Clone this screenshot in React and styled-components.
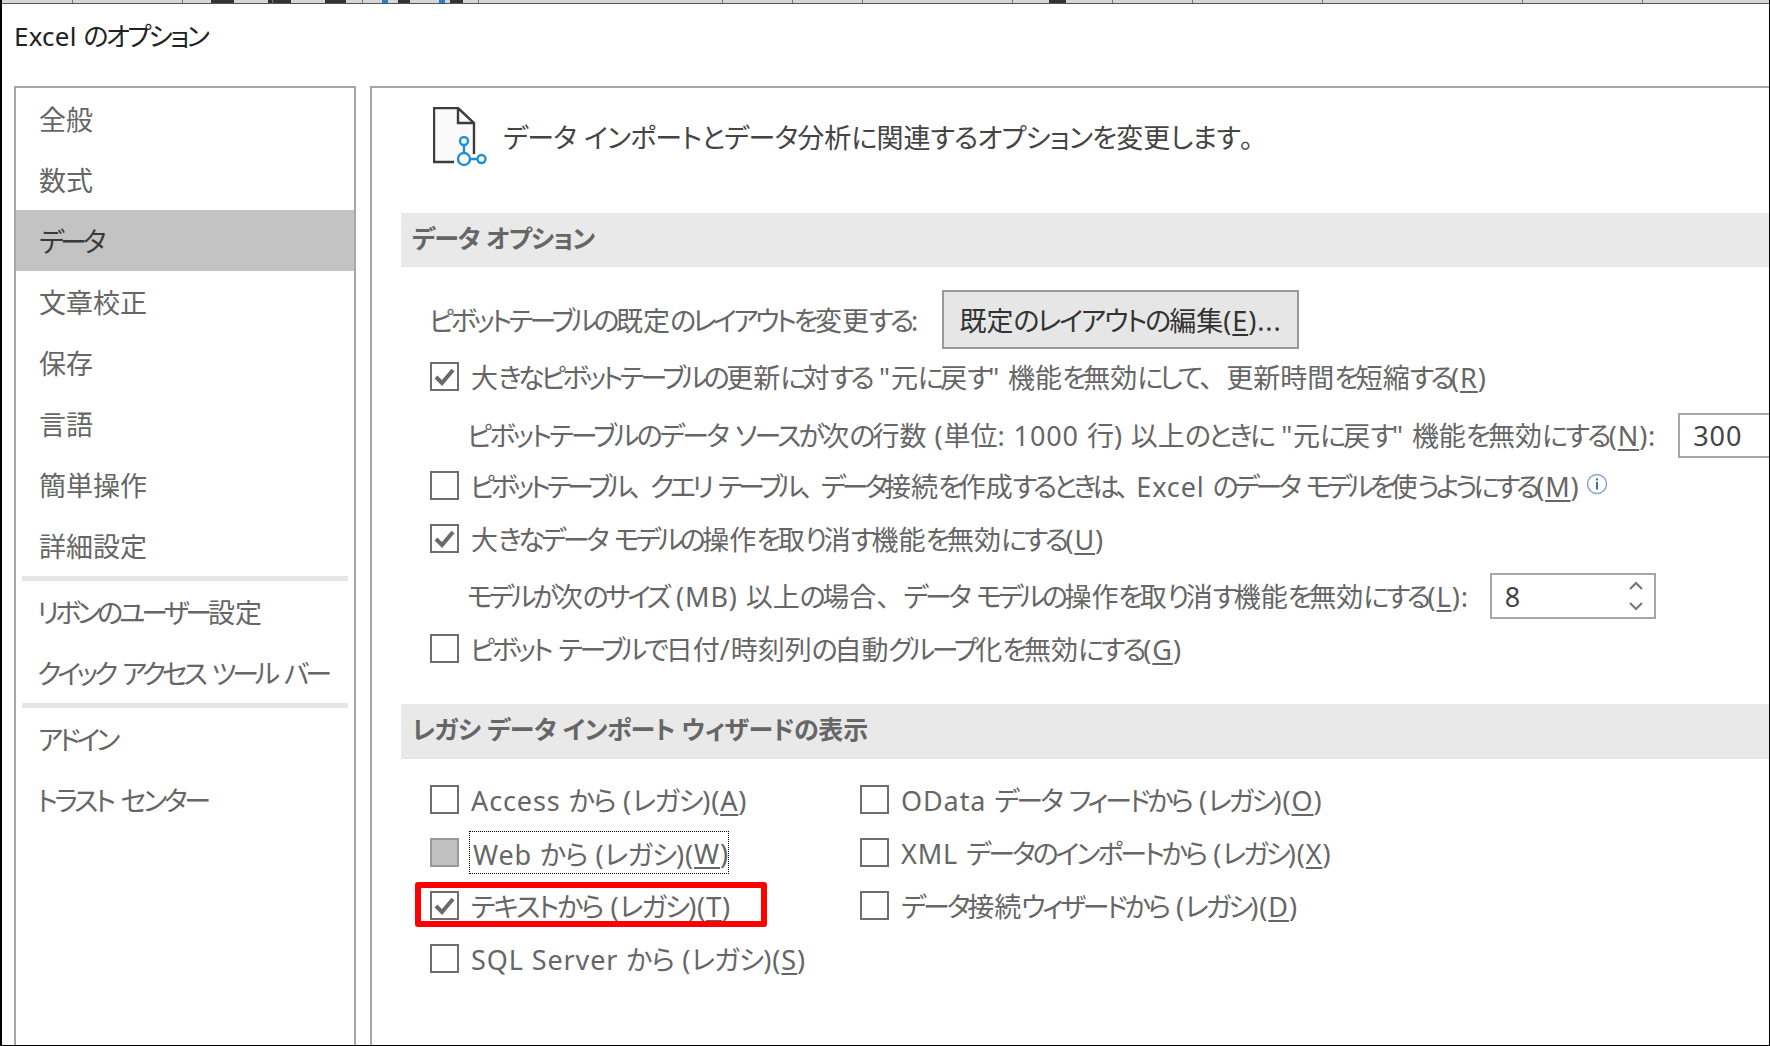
import React from 'react';
import styled, { createGlobalStyle } from 'styled-components';

const Global = createGlobalStyle`
  html, body { margin: 0; padding: 0; background: #fff; }
  * { box-sizing: border-box; }
`;

const tracking = p => `
  ${p.$k != null ? `--k: ${p.$k}px;` : ''}
  ${p.$l != null ? `--l: ${p.$l}px;` : ''}
  ${p.$p != null ? `--p: ${p.$p}px;` : ''}
`;

const Window = styled.div`
  --k: -3px;
  --l: 0.9px;
  --p: 0px;
  width: 1770px;
  height: 1046px;
  overflow: hidden;
  display: flex;
  flex-direction: column;
  background: #fff;
  border-left: 2px solid #000;
  border-right: 1px solid #000;
  border-bottom: 1px solid #000;
  font-family: "Noto Sans", "Noto Sans CJK JP", sans-serif;
  font-feature-settings: "palt";
  font-size: 27px;
  color: #666;
`;

const Kana = styled.span`
  letter-spacing: var(--k);
`;

const Latin = styled.span`
  letter-spacing: var(--l);
`;

const Punct = styled.span`
  font-feature-settings: normal;
  letter-spacing: var(--p);
`;

const Key = styled.span`
  letter-spacing: var(--l);
  text-decoration: underline;
  text-underline-offset: 3px;
  text-decoration-thickness: 1.5px;
`;

const RUNS = /[\u3040-\u30ff]+|[、。]|[\x00-\x7f]+|[^\x00-\x7f\u3040-\u30ff、。]+/g;

const splitRuns = text =>
  text.match(RUNS).map((run, i) => {
    if (/^[\u3040-\u30ff]/.test(run)) return <Kana key={i}>{run}</Kana>;
    if (/^[、。]/.test(run)) return <Punct key={i}>{run}</Punct>;
    if (/^[\x00-\x7f]/.test(run)) return <Latin key={i}>{run}</Latin>;
    return <span key={i}>{run}</span>;
  });

const T = ({ children }) => (
  <span>
    {React.Children.map(children, c => (typeof c === 'string' ? splitRuns(c) : c))}
  </span>
);

const TopSliver = styled.svg`
  display: block;
  flex: none;
`;

const Title = styled.div`
  ${tracking}
  flex: none;
  height: 82px;
  padding: 12px 0 0 12px;
  font-size: 26px;
  line-height: 40px;
  color: #222;
`;

const Body = styled.div`
  flex: 1;
  min-height: 0;
  display: flex;
  gap: 14px;
  padding-left: 12px;
`;

const Sidebar = styled.nav`
  flex: none;
  width: 342px;
  border: 2px solid #a6a6a6;
  border-bottom: none;
`;

const NavItem = styled.div`
  ${tracking}
  height: 61px;
  display: flex;
  align-items: center;
  white-space: nowrap;
  padding-left: ${p => p.$pad ?? 23}px;
  background: ${p => (p.$active ? '#c3c3c3' : 'transparent')};
  color: ${p => (p.$active ? '#3a3a3a' : '#666')};
`;

const NavRule = styled.div`
  height: 5px;
  margin: 0 6px;
  background: #e6e6e6;
`;

const Panel = styled.main`
  flex: 1;
  min-width: 0;
  overflow: hidden;
  border: 2px solid #a6a6a6;
  border-width: 2px 0 0 2px;
  padding-left: 29px;
`;

const Header = styled.header`
  height: 125px;
  display: flex;
  align-items: flex-start;
  gap: 14px;
  padding: 19px 0 0 32px;
  color: #444;
`;

const HeaderText = styled.h1`
  ${tracking}
  margin: 11px 0 0;
  font-size: 27px;
  font-weight: 400;
  line-height: 40px;
  white-space: nowrap;
`;

const Band = styled.h2`
  ${tracking}
  margin: 0;
  height: ${p => p.$h}px;
  display: flex;
  align-items: center;
  padding: 0 0 6px 11px;
  background: #e9e9e9;
  border-bottom: 1px solid #e2e2e2;
  font-size: 25px;
  font-weight: 700;
  color: #666;
  white-space: nowrap;
`;

const Options = styled.div`
  padding: 23px 0 27px 28px;
  display: flex;
  flex-direction: column;
`;

const Row = styled.div`
  height: ${p => p.$h}px;
  display: flex;
  align-items: center;
  white-space: nowrap;
  padding-left: ${p => p.$indent ?? 1}px;
`;

const Label = styled.span`
  ${tracking}
  margin-left: ${p => p.$ml ?? 0}px;
  padding-top: 2px;
  line-height: 38px;
`;

const Button = styled.button`
  ${tracking}
  flex: none;
  height: 59px;
  width: 357px;
  margin-left: ${p => p.$ml}px;
  background: #e6e6e6;
  border: 2px solid #999;
  font: inherit;
  font-feature-settings: inherit;
  color: #333;
  padding: 0;
  white-space: nowrap;
`;

const Box = styled.span`
  flex: none;
  width: 29px;
  height: 29px;
  display: inline-flex;
  align-items: center;
  justify-content: center;
  border: 2px solid ${p => (p.$muted ? '#999' : '#6e6e6e')};
  background: ${p => (p.$muted ? '#c1c1c1' : '#fff')};
`;

const Field = styled.div`
  flex: none;
  height: ${p => p.$h}px;
  width: ${p => p.$w}px;
  margin-left: ${p => p.$ml}px;
  display: flex;
  align-items: center;
  justify-content: space-between;
  padding: 0 10px 0 13px;
  border: 2px solid #a6a6a6;
  border-right-width: ${p => (p.$open ? 0 : 2)}px;
  color: #444;
  letter-spacing: var(--l);
`;

const Spin = styled.svg`
  display: block;
`;

const Info = styled.svg`
  flex: none;
  margin: -3px 0 0 6px;
`;

const Legacy = styled.div`
  padding: 14px 0 0 29px;
  display: grid;
  grid-template-columns: 430px 1fr;
  grid-auto-rows: 53px;
`;

const Cell = styled.div`
  position: relative;
  display: flex;
  align-items: center;
  white-space: nowrap;
`;

const Focus = styled.span`
  ${tracking}
  display: flex;
  align-items: center;
  height: 43px;
  width: 260px;
  margin-left: 10px;
  padding: 2px 0 0 3px;
  border: 1px dotted #000;
`;

const Callout = styled.div`
  position: absolute;
  left: -15px;
  top: 3px;
  width: 352px;
  height: 45px;
  border: 6px solid #ff0000;
  border-radius: 3px;
  pointer-events: none;
`;

const Check = () => (
  <svg width="21" height="19" viewBox="0 0 21 19" aria-hidden="true">
    <path d="M2 10 L8 16 L19 3" fill="none" stroke="#6a6a6a" strokeWidth="4" />
  </svg>
);

const CheckBox = ({ on, muted }) => <Box $muted={muted}>{on && <Check />}</Box>;

const DocIcon = () => (
  <svg width="56" height="62" viewBox="0 0 56 62" aria-hidden="true">
    <path d="M21 55 H1 V1 H25 L41 16 V47" fill="#fafafa" stroke="#3c3c3c" strokeWidth="2.4" />
    <path d="M25 1 V16 H41" fill="none" stroke="#3c3c3c" strokeWidth="2.4" />
    <g fill="#fff" stroke="#1e8fd5" strokeWidth="2.4">
      <path d="M31 38 V46 M37 52 H44" fill="none" />
      <circle cx="31" cy="34" r="4" />
      <circle cx="31" cy="52" r="6" />
      <circle cx="48.5" cy="52" r="4" />
    </g>
  </svg>
);

const navTop = ['全般', '数式', 'データ', '文章校正', '保存', '言語', '簡単操作', '詳細設定'];

const sliverDark = [[209, 23], [266, 23], [323, 21], [396, 12], [448, 13], [1047, 17]];
const sliverTicks = [70, 180, 270, 360, 476, 720, 790, 860, 1010, 1110, 1190, 1320, 1520, 1640];

export default function App() {
  return (
    <>
      <Global />
      <Window>
        <TopSliver width="1767" height="4" viewBox="0 0 1767 4" aria-hidden="true">
          <rect width="1767" height="3" fill="#d6d6d6" />
          <rect y="3" width="1767" height="1" fill="#555" />
          {sliverDark.map(([x, w]) => <rect key={x} x={x} width={w} height="3" fill="#333" />)}
          {sliverTicks.map(x => <rect key={x} x={x} width="1" height="3" fill="#777" />)}
          <rect x="380" width="6" height="3" fill="#2a7fbf" />
          <rect x="437" width="6" height="3" fill="#2a7fbf" />
        </TopSliver>
        <Title $k={-2.6} $l={0.2}><T>Excel のオプション</T></Title>
        <Body>
          <Sidebar>
            {navTop.map(t => (
              <NavItem key={t} $active={t === 'データ'} $k={-4}><T>{t}</T></NavItem>
            ))}
            <NavRule />
            <NavItem $pad={21} $k={-4}><T>リボンのユーザー設定</T></NavItem>
            <NavItem $pad={21} $k={-4.1}><T>クイック アクセス ツール バー</T></NavItem>
            <NavRule />
            <NavItem $pad={22} $k={-4}><T>アドイン</T></NavItem>
            <NavItem $pad={21} $k={-3.2}><T>トラスト センター</T></NavItem>
          </Sidebar>
          <Panel>
            <Header>
              <DocIcon />
              <HeaderText $k={-0.8}><T>データ インポートとデータ分析に関連するオプションを変更します。</T></HeaderText>
            </Header>
            <Band $h={54} $k={-1} $l={0}><T>データ オプション</T></Band>
            <Options>
              <Row $h={59} $indent={0}>
                <Label $k={-3.4}><T>ピボットテーブルの既定のレイアウトを変更する:</T></Label>
                <Button $ml={23} $k={-2}><T>既定のレイアウトの編集(</T><Key>E</Key><T>)...</T></Button>
              </Row>
              <Row $h={55}>
                <CheckBox on />
                <Label $ml={12} $k={-3.6}><T>大きなピボットテーブルの更新に対する "元に戻す" 機能を無効にして、更新時間を短縮する(</T><Key>R</Key><T>)</T></Label>
              </Row>
              <Row $h={62} $indent={38}>
                <Label $k={-2.75}><T>ピボットテーブルのデータ ソースが次の行数 (単位: 1000 行) 以上のときに "元に戻す" 機能を無効にする(</T><Key>N</Key><T>):</T></Label>
                <Field $h={45} $w={110} $ml={22} $open>300</Field>
              </Row>
              <Row $h={39}>
                <CheckBox />
                <Label $ml={11} $k={-4.1} $p={-6}><T>ピボットテーブル、クエリ テーブル、データ接続を作成するときは、Excel のデータ モデルを使うようにする(</T><Key>M</Key><T>)</T></Label>
                <Info width="22" height="22" viewBox="0 0 22 22" aria-hidden="true">
                  <circle cx="11" cy="11" r="9.5" fill="none" stroke="#8aa6d6" strokeWidth="1.5" />
                  <rect x="10" y="9" width="2" height="7.5" fill="#2f6fba" />
                  <rect x="10" y="5.5" width="2" height="2" fill="#2f6fba" />
                </Info>
              </Row>
              <Row $h={67}>
                <CheckBox on />
                <Label $ml={12} $k={-3.5}><T>大きなデータ モデルの操作を取り消す機能を無効にする(</T><Key>U</Key><T>)</T></Label>
              </Row>
              <Row $h={48} $indent={38}>
                <Label $k={-3.5}><T>モデルが次のサイズ (MB) 以上の場合、データ モデルの操作を取り消す機能を無効にする(</T><Key>L</Key><T>):</T></Label>
                <Field $h={46} $w={166} $ml={21}>
                  8
                  <Spin width="16" height="30" viewBox="0 0 16 30" aria-hidden="true">
                    <path d="M2 8 L8 2 L14 8 M2 22 L8 28 L14 22" fill="none" stroke="#777" strokeWidth="2.2" />
                  </Spin>
                </Field>
              </Row>
              <Row $h={57}>
                <CheckBox />
                <Label $ml={11} $k={-3.2}><T>ピボット テーブルで日付/時刻列の自動グループ化を無効にする(</T><Key>G</Key><T>)</T></Label>
              </Row>
            </Options>
            <Band $h={55} $k={-0.5} $l={0}><T>レガシ データ インポート ウィザードの表示</T></Band>
            <Legacy>
              <Cell><CheckBox /><Label $ml={12} $k={-1.5}><T>Access から (レガシ)(</T><Key>A</Key><T>)</T></Label></Cell>
              <Cell><CheckBox /><Label $ml={12}><T>OData データ フィードから (レガシ)(</T><Key>O</Key><T>)</T></Label></Cell>
              <Cell><CheckBox muted /><Focus $k={-1}><T>Web から (レガシ)(</T><Key>W</Key><T>)</T></Focus></Cell>
              <Cell><CheckBox /><Label $ml={12}><T>XML データのインポートから (レガシ)(</T><Key>X</Key><T>)</T></Label></Cell>
              <Cell><CheckBox on /><Label $ml={12} $k={-2}><T>テキストから (レガシ)(</T><Key>T</Key><T>)</T></Label><Callout /></Cell>
              <Cell><CheckBox /><Label $ml={12} $k={-3.1}><T>データ接続ウィザードから (レガシ)(</T><Key>D</Key><T>)</T></Label></Cell>
              <Cell><CheckBox /><Label $ml={12} $k={-0.8}><T>SQL Server から (レガシ)(</T><Key>S</Key><T>)</T></Label></Cell>
            </Legacy>
          </Panel>
        </Body>
      </Window>
    </>
  );
}
